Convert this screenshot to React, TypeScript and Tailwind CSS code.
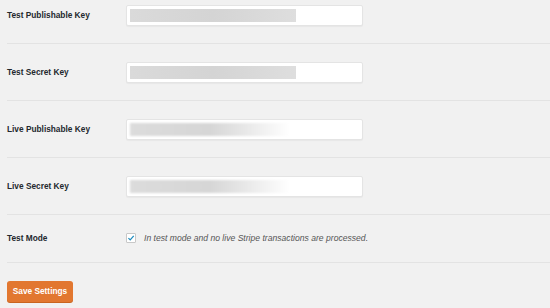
import React from "react";

const keys = [
  { label: "Test Publishable Key", live: false },
  { label: "Test Secret Key", live: false },
  { label: "Live Publishable Key", live: true },
  { label: "Live Secret Key", live: true },
];

function KeyField({ live }: { live: boolean }) {
  return (
    <div className="h-[21px] w-[237px] rounded-[2px] border border-[#e4e4e4] bg-white p-[3px] shadow-[0_1px_1px_rgba(0,0,0,0.04)]">
      {live ? (
        <div className="h-full w-[160px] bg-linear-to-r from-[#dcdcdc] via-[#d6d6d6] to-white blur-[1px]" />
      ) : (
        <div className="h-full w-[166px] bg-linear-to-r from-[#dadada] via-[#d4d4d4] to-[#dedede] blur-[0.6px]" />
      )}
    </div>
  );
}

export default function App() {
  return (
    <div
      className="h-[308px] w-[550px] overflow-hidden bg-[#f1f1f1] pl-[7px] text-[#23282d]"
      style={{ fontFamily: '"Liberation Sans", Arial, sans-serif' }}
    >
      <div className="-mt-[13px]">
        {keys.map((k) => (
          <div
            key={k.label}
            className="flex h-[57px] items-center border-b border-[#e3e3e3]"
          >
            <div className="w-[119px] text-[8.3px] font-bold">{k.label}</div>
            <KeyField live={k.live} />
          </div>
        ))}
        <div className="flex h-[48px] items-center border-b border-[#e3e3e3]">
          <div className="w-[119px] text-[8.3px] font-bold">Test Mode</div>
          <div className="flex items-center gap-[8px]">
            <span className="flex h-[10px] w-[10px] items-center justify-center rounded-[1px] border border-[#c8c8c8] bg-white">
              <svg viewBox="0 0 10 10" className="h-[8px] w-[8px]">
                <path
                  d="M1.8 5.2 L4 7.3 L8.4 2.4"
                  fill="none"
                  stroke="#1e8cbe"
                  strokeWidth="1.6"
                />
              </svg>
            </span>
            <span className="text-[8.6px] italic text-[#555]">
              In test mode and no live Stripe transactions are processed.
            </span>
          </div>
        </div>
        <div className="pt-[14px]">
          <button className="h-[21px] w-[66px] rounded-[3px] bg-[#e27730] text-[8.3px] font-bold text-white shadow-[0_1px_0_#c9641f]">
            Save Settings
          </button>
        </div>
      </div>
    </div>
  );
}
